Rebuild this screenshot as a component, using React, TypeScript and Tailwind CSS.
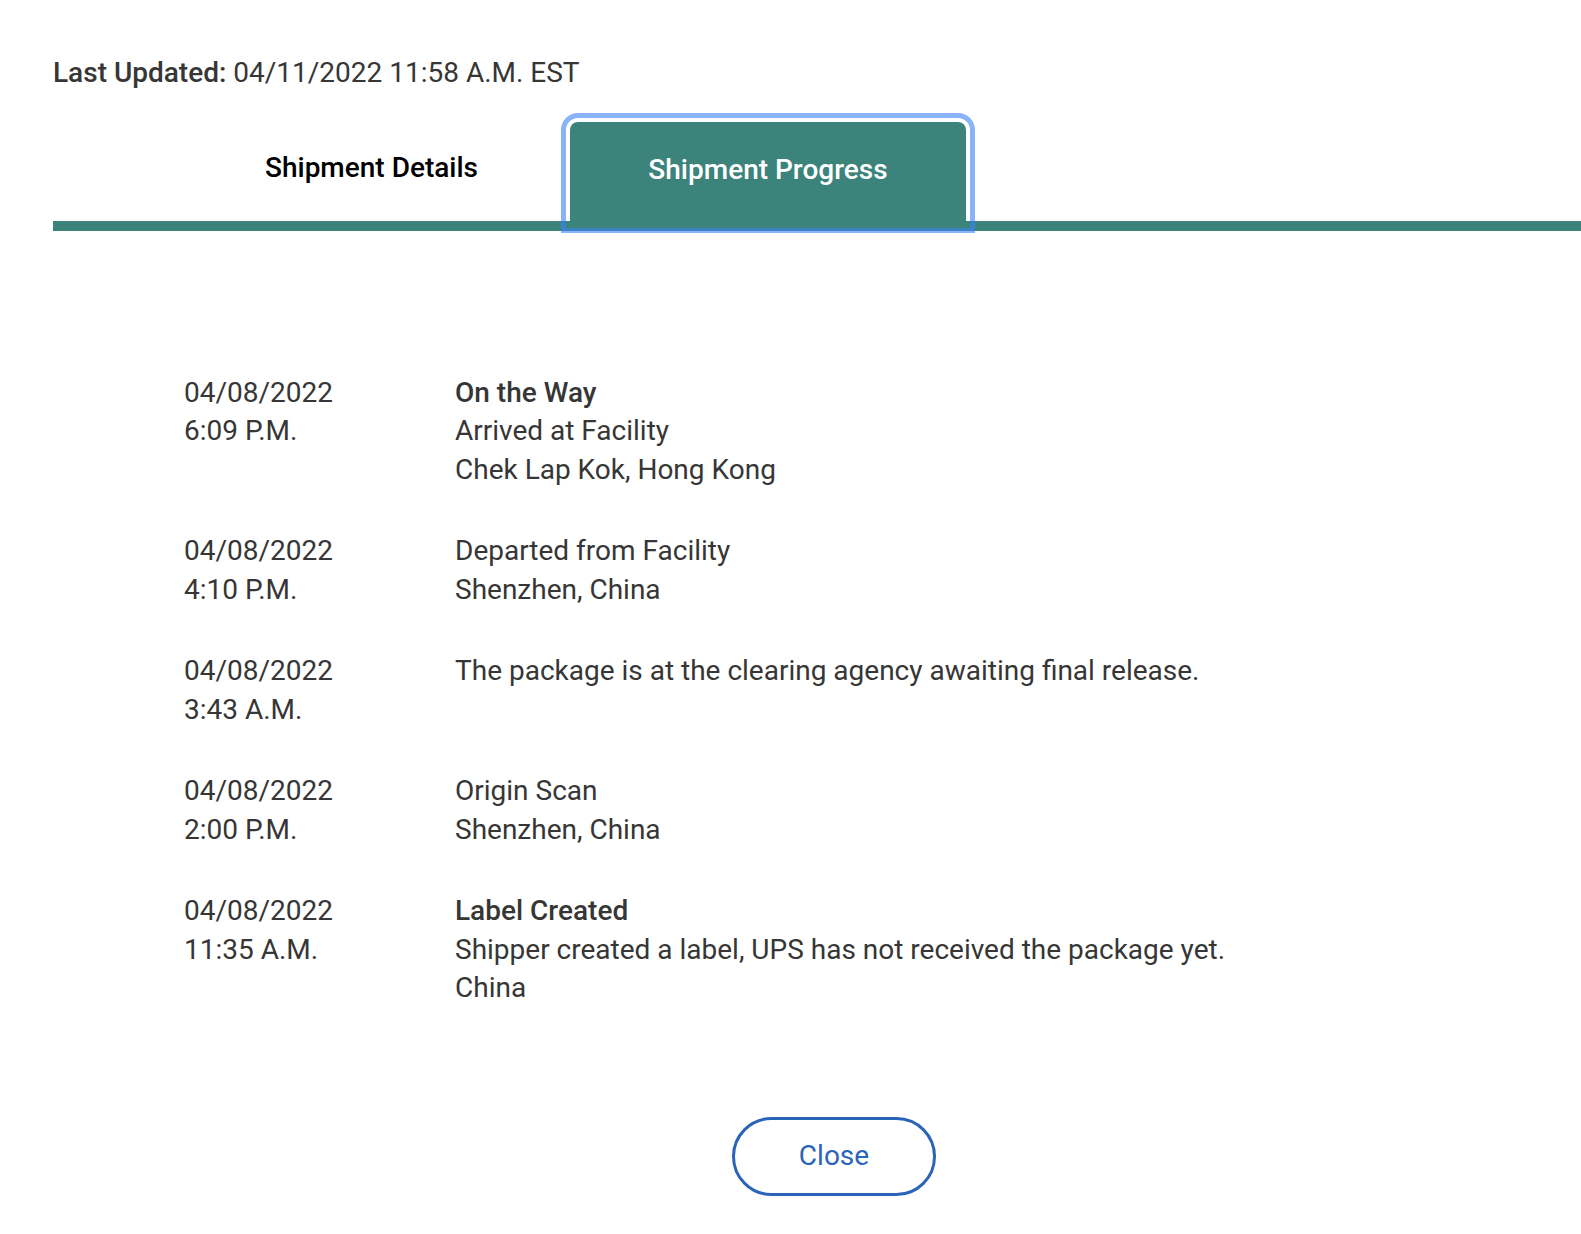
import React from "react";

const events = [
  {
    date: "04/08/2022",
    time: "6:09 P.M.",
    status: "On the Way",
    lines: ["Arrived at Facility", "Chek Lap Kok, Hong Kong"],
  },
  {
    date: "04/08/2022",
    time: "4:10 P.M.",
    lines: ["Departed from Facility", "Shenzhen, China"],
  },
  {
    date: "04/08/2022",
    time: "3:43 A.M.",
    lines: ["The package is at the clearing agency awaiting final release."],
  },
  {
    date: "04/08/2022",
    time: "2:00 P.M.",
    lines: ["Origin Scan", "Shenzhen, China"],
  },
  {
    date: "04/08/2022",
    time: "11:35 A.M.",
    status: "Label Created",
    lines: ["Shipper created a label, UPS has not received the package yet.", "China"],
  },
];

export default function App() {
  return (
    <div className="min-h-screen overflow-hidden bg-white pl-[53px] pt-[54px] font-['Roboto',sans-serif] text-[28px] leading-[38.5px] text-[#363636]">
      <p>
        <span className="font-medium">Last Updated:</span> 04/11/2022 11:58 A.M. EST
      </p>

      <div className="mt-[29px] flex border-b-[10px] border-[#3b837b] pl-[120px]">
        <button className="flex h-[99px] w-[397px] items-center justify-center pb-[5px] font-medium text-black">
          Shipment Details
        </button>
        <button className="relative -mb-[3px] flex h-[102px] w-[396px] items-center justify-center rounded-t-[8px] bg-[#3b837b] pb-[4px] font-medium text-white outline-[5px] outline-offset-[4px] outline-[rgba(59,130,246,0.6)] outline-solid">
          Shipment Progress
        </button>
      </div>

      <div className="mt-[143px] flex flex-col gap-[43px] pl-[131px]">
        {events.map((e, i) => (
          <div key={i} className="flex">
            <div className="w-[271px] shrink-0">
              <div>{e.date}</div>
              <div>{e.time}</div>
            </div>
            <div>
              {e.status && <div className="font-medium">{e.status}</div>}
              {e.lines.map((l, j) => (
                <div key={j}>{l}</div>
              ))}
            </div>
          </div>
        ))}
      </div>

      <div className="mt-[109px] pl-[679px]">
        <button className="h-[79px] w-[204px] rounded-full border-[3px] border-[#2a64b9] text-[#2a64b9]">
          Close
        </button>
      </div>
    </div>
  );
}
